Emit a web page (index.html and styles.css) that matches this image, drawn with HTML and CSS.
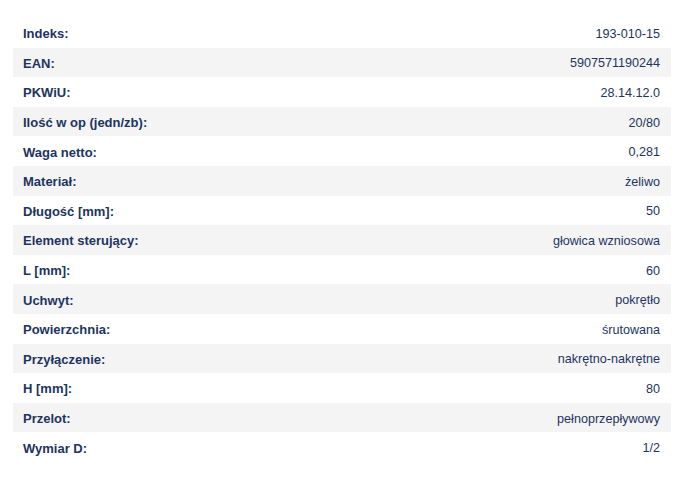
FILE: index.html
```html
<!DOCTYPE html>
<html lang="pl">
<head>
<meta charset="utf-8">
<link rel="stylesheet" href="styles.css">
</head>
<body>
<div class="specs">
  <div class="row"><span class="label">Indeks:</span><span class="value">193-010-15</span></div>
  <div class="row"><span class="label">EAN:</span><span class="value">5907571190244</span></div>
  <div class="row"><span class="label">PKWiU:</span><span class="value">28.14.12.0</span></div>
  <div class="row"><span class="label">Ilość w op (jedn/zb):</span><span class="value">20/80</span></div>
  <div class="row"><span class="label">Waga netto:</span><span class="value">0,281</span></div>
  <div class="row"><span class="label">Materiał:</span><span class="value">żeliwo</span></div>
  <div class="row"><span class="label">Długość [mm]:</span><span class="value">50</span></div>
  <div class="row"><span class="label">Element sterujący:</span><span class="value">głowica wzniosowa</span></div>
  <div class="row"><span class="label">L [mm]:</span><span class="value">60</span></div>
  <div class="row"><span class="label">Uchwyt:</span><span class="value">pokrętło</span></div>
  <div class="row"><span class="label">Powierzchnia:</span><span class="value">śrutowana</span></div>
  <div class="row"><span class="label">Przyłączenie:</span><span class="value">nakrętno-nakrętne</span></div>
  <div class="row"><span class="label">H [mm]:</span><span class="value">80</span></div>
  <div class="row"><span class="label">Przelot:</span><span class="value">pełnoprzepływowy</span></div>
  <div class="row"><span class="label">Wymiar D:</span><span class="value">1/2</span></div>
</div>
</body>
</html>
```
FILE: styles.css
```css
html, body {
  margin: 0;
  padding: 0;
  background: #ffffff;
}
body {
  padding: 18px 9px 0 13px;
  font-family: "Liberation Sans", Arial, sans-serif;
  color: #1d3461;
}
.specs {
  display: flex;
  flex-direction: column;
}
.row {
  display: flex;
  justify-content: space-between;
  align-items: center;
  box-sizing: border-box;
  height: 29.6px;
  padding: 2px 11px 0 10px;
}
.row:nth-child(even) {
  background: #f4f4f4;
}
.label {
  font-weight: bold;
  font-size: 13px;
}
.value {
  font-size: 12.6px;
}
```
